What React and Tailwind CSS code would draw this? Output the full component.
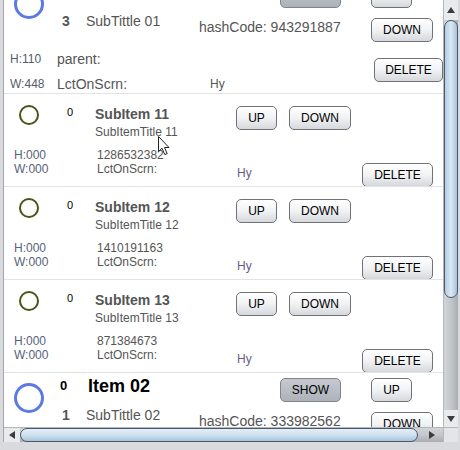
import React from 'react';

const font = { fontFamily: '"Liberation Sans", Arial, sans-serif' };

const Btn = ({ label, w, pressed }) => (
    <div
        className={`h-[24px] ${w} flex items-center justify-center rounded-[5px] border text-[12px] leading-none text-black ${
            pressed
                ? 'border-[#80858d] bg-gradient-to-b from-[#c6cad0] to-[#adb2b9]'
                : 'border-[#6f7276] bg-gradient-to-b from-[#ffffff] via-[#f1f2f4] to-[#d5d8dc]'
        }`}
    >
        {label}
    </div>
);

// Top level item: 114px of content + 1px separator
const MainItem = ({ num, title, sub, hash, h, w, offset }) => (
    <div className={`h-[115px] border-b border-[#e3e3e3] overflow-hidden shrink-0 ${offset}`}>
        <div className="flex h-[66px]">
            <div className="w-[52px] pl-[10px] pt-[10px] shrink-0">
                <div className="w-[30px] h-[30px] rounded-full border-[3px] border-[#5b7ae4]" />
            </div>
            <div className="w-[30px] shrink-0">
                <div className="pl-[4px] mt-[5px] h-[16px] leading-[16px] text-[13px] font-bold text-black">0</div>
                <div className="pl-[6px] mt-[13px] h-[16px] leading-[16px] text-[14px] font-bold text-[#555]">{num}</div>
            </div>
            <div className="w-[113px] shrink-0 whitespace-nowrap">
                <div className="pl-[2px] mt-[2px] h-[22px] leading-[22px] text-[18px] font-bold text-black">{title}</div>
                <div className="mt-[10px] h-[16px] leading-[16px] text-[14px] text-[#555]">{sub}</div>
            </div>
            <div className="w-[81px] shrink-0 pt-[40px] whitespace-nowrap text-[14px] leading-[16px] text-[#555]">
                hashCode: {hash}
            </div>
            <div className="w-[91px] shrink-0 pt-[5px]">
                <Btn label="SHOW" w="w-[61px]" pressed />
            </div>
            <div className="shrink-0 pt-[5px] flex flex-col gap-[10px]">
                <Btn label="UP" w="w-[41px]" />
                <Btn label="DOWN" w="w-[62px]" />
            </div>
        </div>
        <div className="flex h-[48px]">
            <div className="w-[53px] shrink-0 pl-[6px] pt-[2px] text-[12px] leading-[25px] text-[#535d6c]">
                <div>H:{h}</div>
                <div>W:{w}</div>
            </div>
            <div className="w-[153px] shrink-0 pt-[2px] text-[14px] leading-[25px] text-[#555]">
                <div>parent:</div>
                <div>LctOnScrn:</div>
            </div>
            <div className="w-[164px] shrink-0 pt-[27px] text-[12px] leading-[25px] text-[#555]">Hy</div>
            <div className="shrink-0 pt-[13px]">
                <Btn label="DELETE" w="w-[69px]" />
            </div>
        </div>
    </div>
);

// Child item: 92px of content + 1px separator
const SubItem = ({ n, code }) => (
    <div className="h-[93px] border-b border-[#e3e3e3] overflow-hidden shrink-0">
        <div className="flex h-[48px]">
            <div className="w-[52px] shrink-0 pl-[15px] pt-[11px]">
                <div className="w-[20px] h-[20px] rounded-full border-[2px] border-[#4a5418]" />
            </div>
            <div className="w-[39px] shrink-0 pl-[11px] pt-[11px] text-[11px] leading-[14px] text-black">0</div>
            <div className="w-[141px] shrink-0 pt-[12px] whitespace-nowrap text-[#555]">
                <div className="text-[14px] font-bold leading-[16px]">SubItem {n}</div>
                <div className="mt-[2px] text-[12px] leading-[16px]">SubItemTitle {n}</div>
            </div>
            <div className="shrink-0 pt-[12px] flex gap-[12px]">
                <Btn label="UP" w="w-[41px]" />
                <Btn label="DOWN" w="w-[62px]" />
            </div>
        </div>
        <div className="flex">
            <div className="w-[93px] shrink-0 pl-[10px] pt-[6px] text-[12px] leading-[14px] text-[#56637a]">
                <div>H:000</div>
                <div>W:000</div>
            </div>
            <div className="w-[140px] shrink-0 pt-[6px] text-[12px] leading-[14px] text-[#555]">
                <div>{code}</div>
                <div>LctOnScrn:</div>
            </div>
            <div className="w-[125px] shrink-0 pt-[24px] text-[12px] leading-[14px] text-[#6a5a8c]">Hy</div>
            <div className="shrink-0 pt-[21px]">
                <Btn label="DELETE" w="w-[71px]" />
            </div>
        </div>
    </div>
);

const Tri = ({ dir }) => {
    const pts = {
        up: '0,6 4,0 8,6',
        down: '0,0 8,0 4,6',
        left: '6,0 6,8 0,4',
        right: '0,0 0,8 6,4',
    }[dir];
    const vertical = dir === 'up' || dir === 'down';
    return (
        <svg width={vertical ? 8 : 6} height={vertical ? 6 : 8} viewBox={vertical ? '0 0 8 6' : '0 0 6 8'}>
            <polygon points={pts} fill="#3a3c40" />
        </svg>
    );
};

const Cursor = () => (
    <svg className="absolute left-[158px] top-[136px]" width="13" height="20" viewBox="0 0 13 20">
        <path
            d="M0.5 0.5 L0.5 15.5 L4 12.2 L6.8 18.6 L9.2 17.6 L6.5 11.5 L11 11.5 Z"
            fill="white"
            stroke="#222"
            strokeWidth="1"
            strokeLinejoin="round"
        />
    </svg>
);

export default function App() {
    return (
        <div className="relative w-[460px] h-[450px] bg-[#d8dadd] pl-[3px] pr-[2px] pb-[8px] flex flex-col" style={font}>
            <div className="flex-1 min-h-0 flex flex-col border-l border-[#a3a6ab]">
                <div className="flex-1 min-h-0 flex">
                    <div className="flex-1 min-w-0 bg-white overflow-hidden flex flex-col">
                        <MainItem
                            num="3"
                            title="Item 01"
                            sub="SubTittle 01"
                            hash="943291887"
                            h="110"
                            w="448"
                            offset="-mt-[21px]"
                        />
                        <SubItem n="11" code="1286532382" />
                        <SubItem n="12" code="1410191163" />
                        <SubItem n="13" code="871384673" />
                        <MainItem
                            num="1"
                            title="Item 02"
                            sub="SubTittle 02"
                            hash="333982562"
                            h="110"
                            w="448"
                            offset=""
                        />
                    </div>
                    {/* vertical scrollbar */}
                    <div className="w-[15px] shrink-0 flex flex-col bg-gradient-to-r from-[#d2d4d7] via-[#c3c6ca] to-[#a9adb2] border-l border-[#b4b7bb]">
                        <div className="h-[20px] shrink-0 flex items-center justify-center bg-[#e9eaec]">
                            <Tri dir="up" />
                        </div>
                        <div className="h-[278px] shrink-0 rounded-[8px] border border-[#4d5866] bg-gradient-to-r from-[#b3cde3] via-[#dbe9f4] to-[#a6c3dc]" />
                        <div className="flex-1" />
                        <div className="h-[17px] shrink-0 flex items-center justify-center bg-[#e9eaec]">
                            <Tri dir="down" />
                        </div>
                    </div>
                </div>
                {/* horizontal scrollbar */}
                <div className="h-[15px] shrink-0 flex">
                    <div className="flex-1 flex bg-gradient-to-b from-[#d2d4d7] via-[#c3c6ca] to-[#a9adb2] border-t border-[#b4b7bb]">
                        <div className="w-[16px] shrink-0 flex items-center justify-center bg-[#e9eaec]">
                            <Tri dir="left" />
                        </div>
                        <div className="w-[398px] shrink-0 rounded-[8px] border border-[#4d5866] bg-gradient-to-b from-[#e3eef7] via-[#cfe1ef] to-[#a6c3dc]" />
                        <div className="flex-1 flex items-center justify-end pr-[8px]">
                            <Tri dir="right" />
                        </div>
                    </div>
                    <div className="w-[15px] shrink-0 bg-[#e4e5e7] border-t border-l border-[#b4b7bb]" />
                </div>
            </div>
            <Cursor />
        </div>
    );
}
